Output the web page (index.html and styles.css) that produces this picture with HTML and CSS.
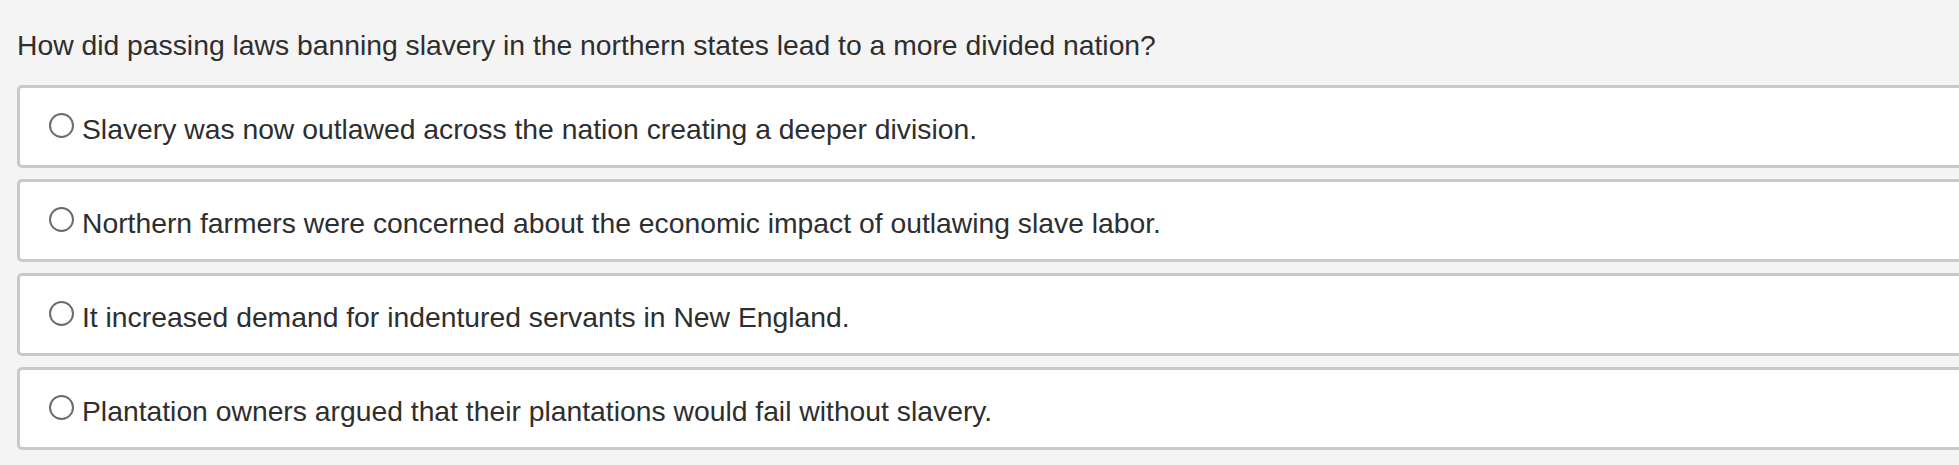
FILE: index.html
```html
<!DOCTYPE html>
<html lang="en">
<head>
  <meta charset="UTF-8" />
  <title>Question</title>
  <link rel="stylesheet" href="styles.css">
</head>
<body>
  <div class="question">
    <p class="prompt">How did passing laws banning slavery in the northern states lead to a more divided nation?</p>

    <div class="options">
      <label class="option">
        <span class="radio"></span>
        <span class="option-text">Slavery was now outlawed across the nation creating a deeper division.</span>
      </label>
      <label class="option">
        <span class="radio"></span>
        <span class="option-text">Northern farmers were concerned about the economic impact of outlawing slave labor.</span>
      </label>
      <label class="option">
        <span class="radio"></span>
        <span class="option-text">It increased demand for indentured servants in New England.</span>
      </label>
      <label class="option">
        <span class="radio"></span>
        <span class="option-text">Plantation owners argued that their plantations would fail without slavery.</span>
      </label>
    </div>
  </div>
</body>
</html>
```

FILE: styles.css
```css
html, body {
  margin: 0;
  background: #f4f4f4;
  overflow: hidden;
}

body {
  font-family: "Liberation Sans", Arial, sans-serif;
  color: #2e2e2e;
}

.question {
  padding: 27px 0 0 17px;
}

.prompt {
  margin: 0 0 22px 0;
  font-size: 28.3px;
  line-height: 36px;
}

.options {
  display: flex;
  flex-direction: column;
  gap: 11px;
  margin-right: -40px;
}

.option {
  display: flex;
  align-items: center;
  gap: 8px;
  height: 77px;
  padding: 0 29px;
  background: #fff;
  border: 3px solid #c9c9c9;
  border-radius: 5px;
  font-size: 28.3px;
  cursor: pointer;
}

.radio {
  width: 21px;
  height: 21px;
  border: 2px solid #6b6b6b;
  border-radius: 50%;
  flex-shrink: 0;
  margin-top: -2px;
}

.option-text {
  padding-top: 4px;
  line-height: 32px;
}
```
